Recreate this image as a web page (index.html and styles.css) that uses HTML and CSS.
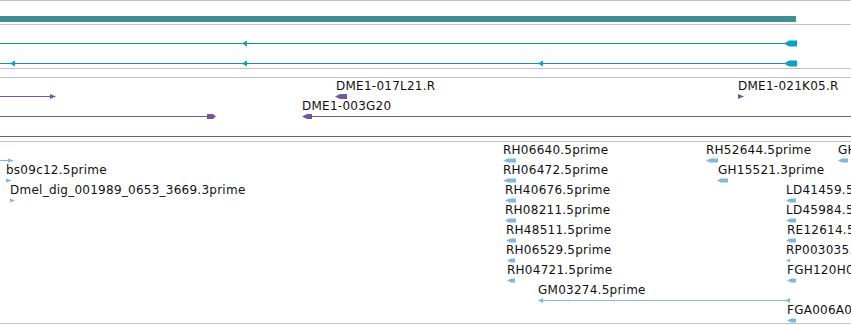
FILE: index.html
```html
<!DOCTYPE html>
<html lang="en">
<head>
    <meta charset="UTF-8">
    <title>Genome tracks</title>
    <link rel="stylesheet" href="styles.css">
</head>
<body>
    <div class="tracks">
        <!-- Gene span -->
        <div class="track track-gene">
            <svg width="851" height="23" class="canvas">
                <rect class="gene-bar" x="0" y="15" width="796" height="6"/>
            </svg>
        </div>

        <!-- Transcripts -->
        <div class="track track-transcripts">
            <svg width="851" height="43" class="canvas">
                <line class="tx-line" x1="0" y1="18.5" x2="786" y2="18.5"/>
                <polygon class="tx-mark" points="242,18.5 247,15.5 247,21.5"/>
                <polygon class="tx-mark" points="784,18.5 789,15.5 797,15.5 797,21.5 789,21.5"/>

                <line class="tx-line" x1="0" y1="38.5" x2="786" y2="38.5"/>
                <polygon class="tx-mark" points="10,38.5 15,35.5 15,41.5"/>
                <polygon class="tx-mark" points="242,38.5 247,35.5 247,41.5"/>
                <polygon class="tx-mark" points="538,38.5 543,35.5 543,41.5"/>
                <polygon class="tx-mark" points="784,38.5 789,35.5 797,35.5 797,41.5 789,41.5"/>
            </svg>
        </div>

        <!-- BAC ends -->
        <div class="track track-clones">
            <svg width="851" height="63" class="canvas">
                <text class="label" x="336" y="12">DME1-017L21.R</text>
                <polygon class="clone-mark" points="335,18.5 340,16 347,16 347,21 340,21"/>
                <text class="label" x="738" y="12">DME1-021K05.R</text>
                <polygon class="clone-mark" points="738,16 744,18.5 738,21"/>

                <line class="clone-line" x1="0" y1="18.5" x2="52" y2="18.5"/>
                <polygon class="clone-mark" points="50,16 56,18.5 50,21"/>

                <text class="label" x="302" y="32">DME1-003G20</text>
                <line class="clone-line" x1="0" y1="38.5" x2="208" y2="38.5"/>
                <polygon class="clone-mark" points="207,36 213,36 216,38.5 213,41 207,41"/>
                <line class="clone-line" x1="306" y1="38.5" x2="851" y2="38.5"/>
                <polygon class="clone-mark" points="302,38.5 307,36 312,36 312,41 307,41"/>

                <line class="clone-line" x1="0" y1="58.5" x2="851" y2="58.5"/>
            </svg>
        </div>

        <!-- EST alignments -->
        <div class="track track-est">
            <svg width="851" height="181" class="canvas">
                <!-- left column -->
                <line class="est-line" x1="0" y1="18.5" x2="10" y2="18.5"/>
                <polygon class="est-mark" points="8,16.5 14,18.5 8,20.5"/>
                <text class="label" x="6" y="32">bs09c12.5prime</text>
                <polygon class="est-mark" points="6,36.5 12,38.5 6,40.5"/>
                <text class="label" x="10" y="52">Dmel_dig_001989_0653_3669.3prime</text>
                <polygon class="est-mark" points="10,56.5 15,58.5 10,60.5"/>

                <!-- middle column -->
                <text class="label" x="503" y="12">RH06640.5prime</text>
                <polygon class="est-mark" points="503,18.5 508,16.5 516,16.5 516,20.5 508,20.5"/>
                <text class="label" x="503" y="32">RH06472.5prime</text>
                <polygon class="est-mark" points="503,38.5 508,36.5 516,36.5 516,40.5 508,40.5"/>
                <text class="label" x="505" y="52">RH40676.5prime</text>
                <polygon class="est-mark" points="505,58.5 509,56.5 516,56.5 516,60.5 509,60.5"/>
                <text class="label" x="505" y="72">RH08211.5prime</text>
                <polygon class="est-mark" points="505,78.5 509,76.5 516,76.5 516,80.5 509,80.5"/>
                <text class="label" x="506" y="92">RH48511.5prime</text>
                <polygon class="est-mark" points="506,98.5 510,96.5 516,96.5 516,100.5 510,100.5"/>
                <text class="label" x="506" y="112">RH06529.5prime</text>
                <polygon class="est-mark" points="507,118.5 511,116.5 515,116.5 515,120.5 511,120.5"/>
                <text class="label" x="507" y="132">RH04721.5prime</text>
                <polygon class="est-mark" points="507,138.5 511,136.5 515,136.5 515,140.5 511,140.5"/>
                <text class="label" x="538" y="152">GM03274.5prime</text>
                <line class="est-line" x1="540" y1="158.5" x2="790" y2="158.5"/>
                <polygon class="est-mark" points="538,158.5 543,156 543,161"/>
                <polygon class="est-mark" points="785,158.5 790,156 790,161"/>

                <!-- right column -->
                <text class="label" x="706" y="12">RH52644.5prime</text>
                <polygon class="est-mark" points="706,18.5 710,16.5 718,16.5 718,20.5 710,20.5"/>
                <text class="label" x="838" y="12">GH15887.5prime</text>
                <polygon class="est-mark" points="838,18.5 842,16.5 848,16.5 848,20.5 842,20.5"/>
                <text class="label" x="718" y="32">GH15521.3prime</text>
                <polygon class="est-mark" points="717,38.5 721,36.5 728,36.5 728,40.5 721,40.5"/>
                <text class="label" x="786" y="52">LD41459.5prime</text>
                <polygon class="est-mark" points="786,58.5 790,56.5 796,56.5 796,60.5 790,60.5"/>
                <text class="label" x="786" y="72">LD45984.5prime</text>
                <polygon class="est-mark" points="786,78.5 790,76.5 796,76.5 796,80.5 790,80.5"/>
                <text class="label" x="787" y="92">RE12614.5prime</text>
                <polygon class="est-mark" points="786,98.5 790,96.5 796,96.5 796,100.5 790,100.5"/>
                <text class="label" x="786" y="112">RP003035.5prime</text>
                <polygon class="est-mark" points="786,118.5 790,116.5 790,120.5"/>
                <text class="label" x="787" y="132">FGH120H01.5prime</text>
                <polygon class="est-mark" points="787,138.5 791,136.5 796,136.5 796,140.5 791,140.5"/>
                <text class="label" x="787" y="172">FGA006A01.5prime</text>
                <polygon class="est-mark" points="787,178.5 791,176.5 796,176.5 796,180.5 791,180.5"/>
            </svg>
        </div>
    </div>
</body>
</html>
```

FILE: styles.css
```css
body {
    margin: 0;
    background-color: #fff;
    font-family: 'DejaVu Sans', sans-serif;
    overflow: hidden;
}
.tracks {
    width: 851px;
}
.track {
    border-bottom: 1px solid #c2c2c2;
}
.canvas {
    display: block;
    overflow: hidden;
}
.track-gene {
    border-top: 1px solid #c2c2c2;
    height: 23px;
}
.track-transcripts {
    height: 43px;
    margin-bottom: 8px;
}
.track-clones {
    border-top: 1px solid #c2c2c2;
    height: 63px;
}
.track-est {
    height: 181px;
}

/* feature glyphs */
.gene-bar {
    fill: #3f8e91;
}
.tx-line {
    stroke: #1e8cab;
    stroke-width: 1;
    shape-rendering: crispEdges;
}
.tx-mark {
    fill: #0aa0c6;
}
.clone-line {
    stroke: #7156a5;
    stroke-width: 1;
    shape-rendering: crispEdges;
}
.clone-mark {
    fill: #7156a5;
}
.est-line {
    stroke: #7eb8dd;
    stroke-width: 1;
    shape-rendering: crispEdges;
}
.est-mark {
    fill: #7eb8dd;
}
.label {
    font-family: 'DejaVu Sans', sans-serif;
    font-size: 12px;
    letter-spacing: 0.25px;
    fill: #111;
}
```
